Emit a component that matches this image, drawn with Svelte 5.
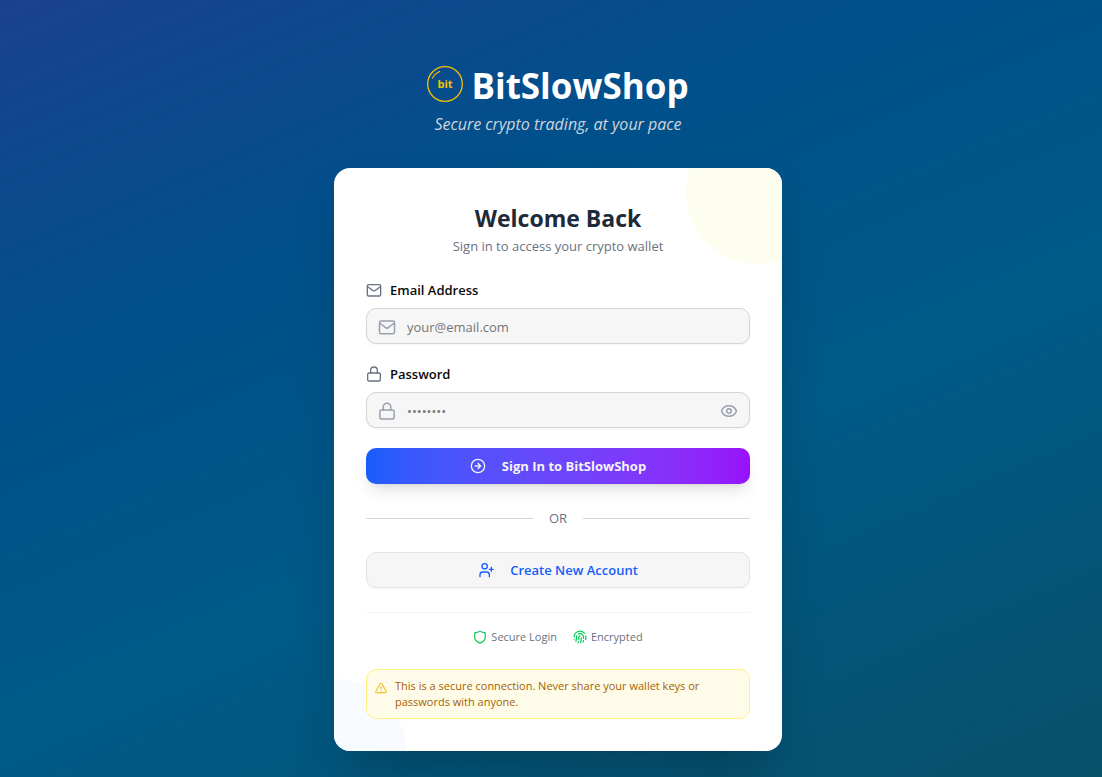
<script>
  let email = $state('');
  let password = $state('');
  let visible = $state(false);
</script>

{#snippet mail()}
  <svg viewBox="0 0 24 24" aria-hidden="true"><rect x="2" y="4" width="20" height="17" rx="2" /><path d="m2.500 7 8.300 6.100a2 2 0 0 0 2.400 0L21.500 7" /></svg>
{/snippet}
{#snippet lock()}
  <svg viewBox="0 0 24 24" aria-hidden="true"><rect x="2.500" y="10.500" width="19" height="12" rx="2" /><path d="M7 10.500V6.500a5 5 0 0 1 10 0v4" /></svg>
{/snippet}

<main>
  <header>
    <h1>
      <svg class="logo" viewBox="0 0 36 36" aria-hidden="true">
        <circle cx="18" cy="18" r="17.3" />
        <path d="M5.500 12Q8 7.500 12.500 5.500" />
        <text x="18" y="22">bit</text>
      </svg>
      BitSlowShop
    </h1>
    <p>Secure crypto trading, at your pace</p>
  </header>

  <section class="card">
    <div class="blob yellow"></div>
    <div class="blob blue"></div>
    <div class="intro">
      <h2>Welcome Back</h2>
      <p>Sign in to access your crypto wallet</p>
    </div>

    <form onsubmit={(e) => e.preventDefault()}>
      <div class="field">
        <label for="email">{@render mail()}Email Address</label>
        <div class="box">
          {@render mail()}
          <input id="email" type="email" placeholder="your@email.com" bind:value={email} />
        </div>
      </div>
      <div class="field">
        <label for="password">{@render lock()}Password</label>
        <div class="box">
          {@render lock()}
          <input id="password" type={visible ? 'text' : 'password'} placeholder="••••••••" bind:value={password} />
          <button class="eye" type="button" aria-label="Show password" onclick={() => (visible = !visible)}>
            <svg viewBox="0 0 24 24" aria-hidden="true"><path d="M2 12C3.700 7.500 7.500 5 12 5s8.300 2.500 10 7c-1.700 4.500-5.500 7-10 7s-8.300-2.500-10-7Z" /><circle cx="12" cy="12" r="3" /></svg>
          </button>
        </div>
      </div>
      <button class="action primary" type="submit">
        <svg viewBox="0 0 24 24" aria-hidden="true"><circle cx="12" cy="12" r="10" /><path d="M8 12h8M12 8l4 4-4 4" /></svg>
        Sign In to BitSlowShop
      </button>
    </form>

    <div class="or">OR</div>

    <button class="action secondary" type="button">
      <svg viewBox="0 0 24 24" aria-hidden="true"><circle cx="10" cy="6.500" r="4" /><path d="M3 22v-3a4 4 0 0 1 4-4h6a4 4 0 0 1 4 4v3M20 8v6M17 11h6" /></svg>
      Create New Account
    </button>

    <div class="badges">
      <span><svg viewBox="0 0 24 24" aria-hidden="true"><path d="M21 13c0 5-3.500 7.500-9 9.500C6.500 20.500 3 18 3 13V5.500c0-.6.400-1 1-1 2.500 0 5-.7 7-2.200a1.600 1.600 0 0 1 2 0c2 1.500 4.500 2.200 7 2.200.6 0 1 .4 1 1Z" /></svg>Secure Login</span>
      <span><svg viewBox="0 0 24 24" aria-hidden="true"><path d="M12 10a2 2 0 0 0-2 2c0 1-.1 2.500-.3 4M14 13.100c0 2.400 0 6.400-1 8.900M17.300 21c.1-.6.400-2.300.5-3M2 12a10 10 0 0 1 18-6M2 16h0M21.800 16c.2-2 .1-5.400 0-6M5 19.500C5.500 18 6 15 6 12a6 6 0 0 1 .3-2M8.700 22c.2-.7.500-1.300.6-2M9 6.800a6 6 0 0 1 9 5.200v2" /></svg>Encrypted</span>
    </div>

    <div class="notice">
      <svg viewBox="0 0 24 24" aria-hidden="true"><path d="m22 18-8-14.500a2.300 2.300 0 0 0-4 0L2 18a2 2 0 0 0 1.700 3.500h16.600A2 2 0 0 0 22 18ZM12 9v5M12 17.500h0" /></svg>
      <p>This is a secure connection. Never share your wallet keys or passwords with anyone.</p>
    </div>
  </section>
</main>

<style>
  :global(body) {
    margin: 0;
    background: #07506a;
  }
  * {
    box-sizing: border-box;
  }
  main {
    min-height: 100vh;
    padding: 64px 16px 26px 30px;
    display: flex;
    flex-direction: column;
    align-items: center;
    gap: 32px;
    background: linear-gradient(157deg, #1a418f, #00508b 30%, #005a87 60%, #07506a);
    font-family: 'Segoe UI', 'Open Sans', 'Noto Sans', sans-serif;
    font-size: 13px;
    line-height: 20px;
  }
  h1, h2, p {
    margin: 0;
  }
  svg {
    width: 16px;
    height: 16px;
    flex: none;
    fill: none;
    stroke: currentColor;
    stroke-width: 2;
    stroke-linecap: round;
    stroke-linejoin: round;
  }
  header {
    text-align: center;
    color: #d1d5dc;
  }
  h1 {
    display: flex;
    justify-content: center;
    gap: 8px;
    color: #fff;
    font-size: 35px;
    line-height: 44px;
    font-weight: 700;
  }
  .logo {
    width: 36px;
    height: 36px;
    margin-top: 2px;
    color: #f5c000;
    stroke-width: 1.300;
  }
  .logo text {
    fill: currentColor;
    stroke: none;
    font-size: 11px;
    font-weight: 700;
    text-anchor: middle;
  }
  header p {
    margin-top: 4px;
    font-size: 16px;
    line-height: 24px;
    font-style: italic;
  }
  .card {
    position: relative;
    width: 100%;
    max-width: 448px;
    padding: 32px;
    overflow: hidden;
    border-radius: 16px;
    background: #fff;
    box-shadow: 0 25px 50px -12px #00000040;
  }
  .blob {
    position: absolute;
    border-radius: 50%;
  }
  .yellow {
    top: -48px;
    right: -48px;
    width: 144px;
    height: 144px;
    background: #fefef0;
  }
  .blue {
    bottom: -72px;
    left: -72px;
    width: 144px;
    height: 144px;
    background: #f7fbff;
  }
  .card > :not(.blob) {
    position: relative;
  }
  .intro {
    text-align: center;
    color: #6a7282;
  }
  h2 {
    color: #1e2939;
    font-size: 23px;
    line-height: 36px;
  }
  form {
    margin-top: 24px;
    display: grid;
    gap: 20px;
  }
  .field {
    display: grid;
    gap: 8px;
  }
  label {
    display: flex;
    align-items: center;
    gap: 8px;
    color: #0a0a0a;
    font-weight: 600;
  }
  label svg {
    color: #6a7282;
  }
  .box {
    height: 36px;
    padding: 1px 11px 0;
    display: flex;
    align-items: center;
    gap: 11px;
    border: 1px solid #d1d5dc;
    border-radius: 10px;
    background: #f6f6f6;
    box-shadow: 0 1px 2px #0000000d;
    color: #99a1af;
  }
  .box svg {
    width: 18px;
    height: 18px;
  }
  input {
    flex: 1;
    min-width: 0;
    padding: 0;
    border: 0;
    outline: 0;
    background: none;
    color: #0a0a0a;
    font: inherit;
  }
  input::placeholder {
    color: #757575;
    opacity: 1;
  }
  button {
    font: inherit;
    cursor: pointer;
  }
  .eye {
    display: flex;
    padding: 0;
    border: 0;
    background: none;
    color: inherit;
  }
  .action {
    width: 100%;
    height: 36px;
    display: flex;
    align-items: center;
    justify-content: center;
    gap: 16px;
    border-radius: 10px;
    font-weight: 600;
  }
  .primary {
    border: 0;
    background: linear-gradient(to right in oklab, #155dfc, #9810fa);
    box-shadow: 0 10px 15px -3px #0000001a, 0 4px 6px -4px #0000001a;
    color: #f3f4f6;
    font-weight: 700;
  }
  .secondary {
    border: 1px solid #e5e5e5;
    background: #f6f6f6;
    box-shadow: 0 1px 2px #0000000d;
    color: #155dfc;
  }
  .or {
    margin: 24px 0;
    display: flex;
    align-items: center;
    gap: 16px;
    color: #6a7282;
  }
  .or::before, .or::after {
    content: '';
    flex: 1;
    height: 1px;
    background: #d1d5dc;
  }
  .badges {
    margin-top: 24px;
    padding-top: 16px;
    display: flex;
    justify-content: center;
    gap: 16px;
    border-top: 1px solid #f3f4f6;
    color: #6a7282;
    font-size: 11px;
    line-height: 16px;
  }
  .badges span {
    display: flex;
    align-items: center;
    gap: 4px;
  }
  .badges svg {
    width: 14px;
    height: 14px;
    color: #00c950;
  }
  .notice {
    margin-top: 24px;
    padding: 8px;
    display: flex;
    gap: 8px;
    border: 1px solid #fff085;
    border-radius: 10px;
    background: #fefce8;
    color: #a65f00;
    font-size: 11px;
    line-height: 16px;
  }
  .notice svg {
    width: 12px;
    height: 12px;
    margin-top: 4px;
    color: #f0b100;
  }
</style>
